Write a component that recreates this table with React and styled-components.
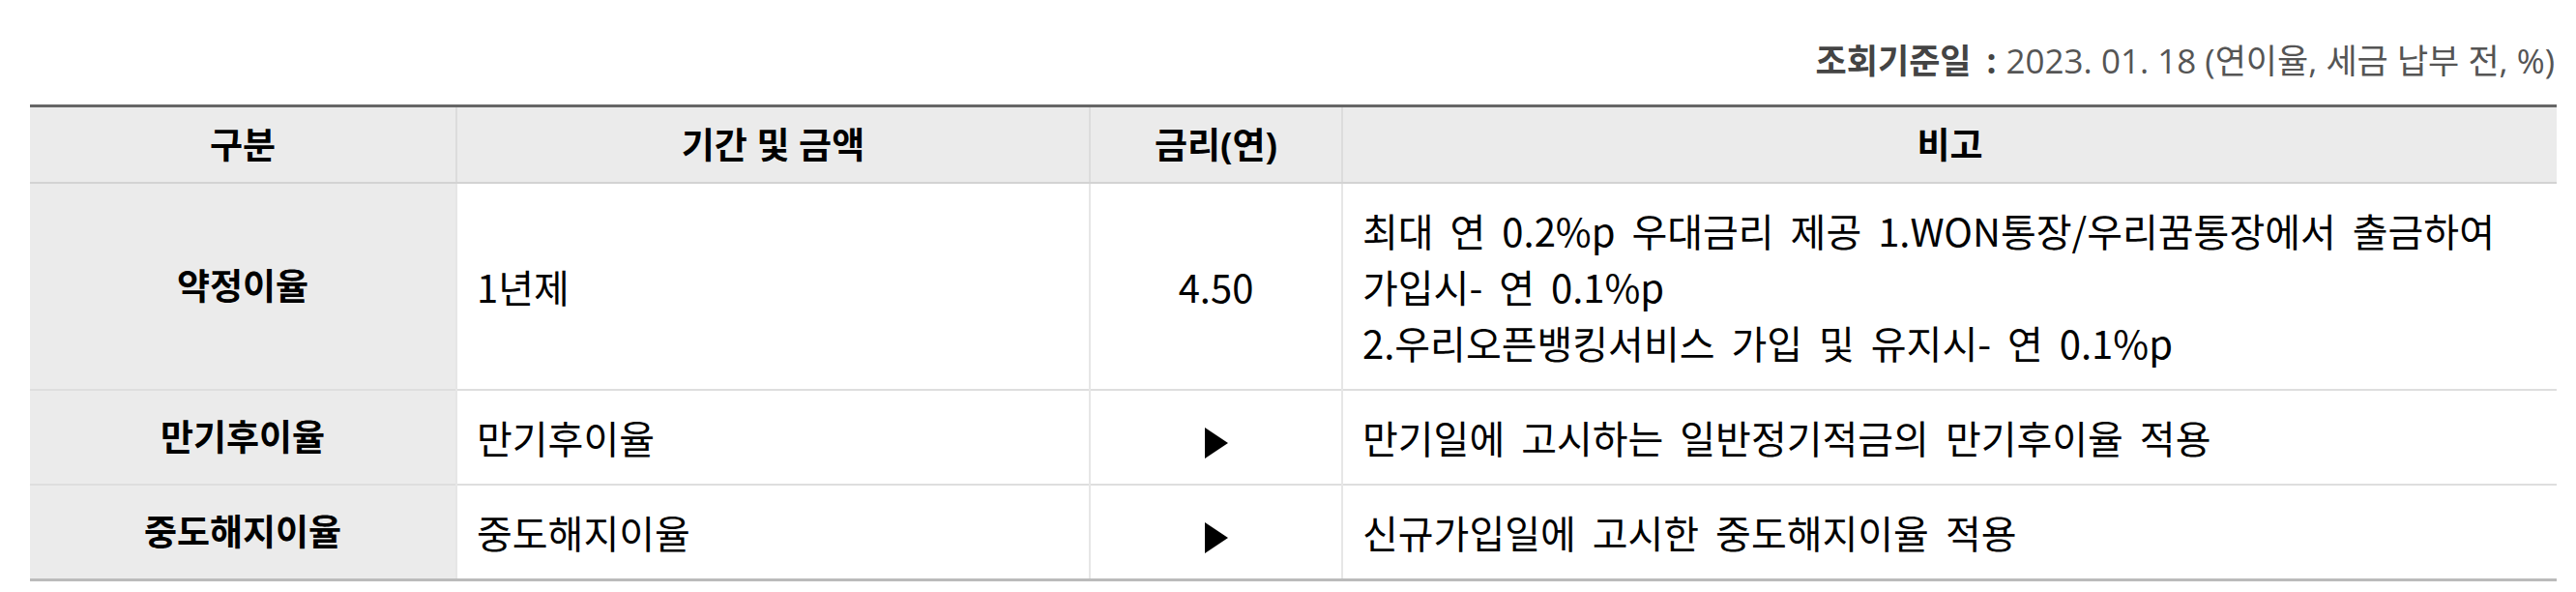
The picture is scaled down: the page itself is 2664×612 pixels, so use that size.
import React from "react";
import styled, { createGlobalStyle } from "styled-components";

const GlobalStyle = createGlobalStyle`
  html, body {
    margin: 0;
    padding: 0;
    background: #fff;
  }
  body {
    font-family: "Open Sans", "Noto Sans CJK KR", sans-serif;
    color: #111;
  }
`;

const Page = styled.div`
  width: 2664px;
  padding: 34px 20px 0 31px;
  box-sizing: border-box;
`;

const Caption = styled.p`
  margin: 0 0 16px;
  text-align: right;
  font-size: 35px;
  line-height: 58px;
  color: #555;
  padding-right: 2px;
`;

const Label = styled.strong`
  font-size: 35px;
  font-weight: 700;
  color: #444;
`;

const Colon = styled.span`
  margin: 0 10px 0 16px;
`;

const Table = styled.table`
  width: 100%;
  border-collapse: collapse;
  table-layout: fixed;
  border-top: 3px solid #666;
  border-bottom: 3px solid #bbb;
`;

const Col = styled.col`
  width: ${(p) => p.$w}px;
`;

const HeadCell = styled.th`
  background: #ebebeb;
  font-size: 37px;
  font-weight: 700;
  line-height: 53px;
  padding: 12px 20px;
  text-align: center;
  color: #000;
  border-bottom: 2px solid #d3d3d3;
  border-left: 2px solid #dcdcdc;

  &:first-child {
    border-left: none;
  }
`;

const RowHead = styled.th`
  background: #ebebeb;
  font-size: 37px;
  font-weight: 700;
  line-height: 58px;
  padding: 19px 20px;
  text-align: center;
  color: #000;
  border-top: 2px solid #dedede;
`;

const Cell = styled.td`
  font-family: "Noto Sans CJK KR", sans-serif;
  font-size: 40px;
  line-height: 58px;
  padding: 19px 20px;
  color: #000;
  text-align: ${(p) => (p.$center ? "center" : "left")};
  border-top: 2px solid #dedede;
  border-left: 2px solid #e6e6e6;
  word-spacing: ${(p) => (p.$center ? 0 : 8)}px;
  vertical-align: middle;
`;

const Arrow = styled.svg`
  display: inline-block;
  vertical-align: middle;
  width: 24px;
  height: 32px;
`;

const Play = () => (
  <Arrow viewBox="0 0 24 32">
    <polygon points="0,0 24,16 0,32" fill="#000" />
  </Arrow>
);

const rows = [
  {
    label: "약정이율",
    term: "1년제",
    rate: "4.50",
    note: [
      "최대 연 0.2%p 우대금리 제공 1.WON통장/우리꿈통장에서 출금하여",
      "가입시- 연 0.1%p",
      "2.우리오픈뱅킹서비스 가입 및 유지시- 연 0.1%p",
    ],
  },
  {
    label: "만기후이율",
    term: "만기후이율",
    rate: null,
    note: ["만기일에 고시하는 일반정기적금의 만기후이율 적용"],
  },
  {
    label: "중도해지이율",
    term: "중도해지이율",
    rate: null,
    note: ["신규가입일에 고시한 중도해지이율 적용"],
  },
];

export default function App() {
  return (
    <>
      <GlobalStyle />
      <Page>
        <Caption>
          <Label>
            조회기준일<Colon>:</Colon>
          </Label>
          2023. 01. 18 (연이율, 세금 납부 전, %)
        </Caption>
        <Table>
          <colgroup>
            <Col $w={441} />
            <Col $w={655} />
            <Col $w={261} />
            <Col $w={1256} />
          </colgroup>
          <thead>
            <tr>
              <HeadCell>구분</HeadCell>
              <HeadCell>기간 및 금액</HeadCell>
              <HeadCell>금리(연)</HeadCell>
              <HeadCell>비고</HeadCell>
            </tr>
          </thead>
          <tbody>
            {rows.map((r) => (
              <tr key={r.label}>
                <RowHead>{r.label}</RowHead>
                <Cell>{r.term}</Cell>
                <Cell $center>{r.rate ?? <Play />}</Cell>
                <Cell>
                  {r.note.map((line, i) => (
                    <React.Fragment key={i}>
                      {i > 0 && <br />}
                      {line}
                    </React.Fragment>
                  ))}
                </Cell>
              </tr>
            ))}
          </tbody>
        </Table>
      </Page>
    </>
  );
}
